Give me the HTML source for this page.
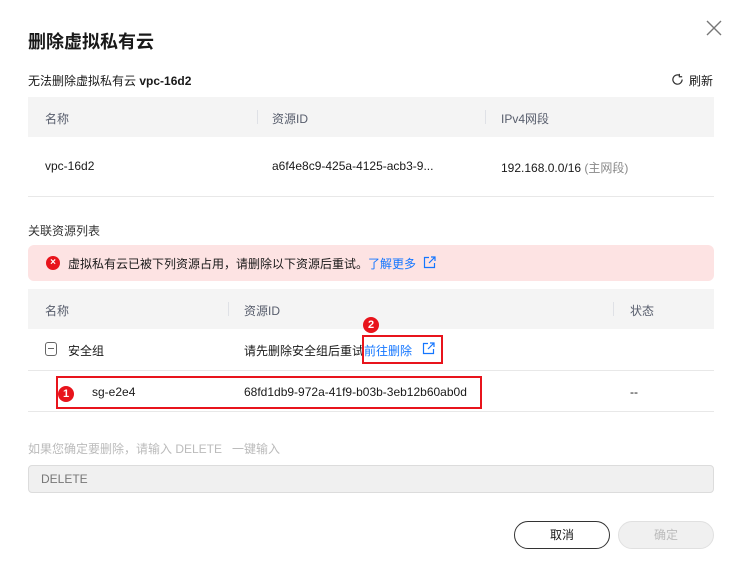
<!DOCTYPE html>
<html><head><meta charset="utf-8"><style>
*{margin:0;padding:0;box-sizing:border-box}
body{width:740px;height:574px;background:#fff;font-family:"Liberation Sans","Noto Sans CJK SC",sans-serif;font-size:12px;color:#191919;position:relative;overflow:hidden}
.a{position:absolute;white-space:nowrap}
.hdr{position:absolute;left:28px;width:686px;background:#f4f4f4;color:#575d6c}
.sep{position:absolute;top:50%;width:1px;height:14px;margin-top:-7px;background:#dfe1e6}
.line{position:absolute;left:28px;width:686px;height:1px;background:#e8e8e8}
.blue{color:#1476ff}
.red{border:2px solid #e8141c;position:absolute}
.num{position:absolute;width:16px;height:16px;border-radius:50%;background:#e8141c;color:#fff;font-size:11px;text-align:center;line-height:16px;font-weight:bold}
</style></head><body>
<div class="a" style="left:28px;top:28px;font-size:18px;font-weight:bold">删除虚拟私有云</div>
<svg class="a" style="left:706px;top:20px" width="16" height="16" viewBox="0 0 16 16"><path d="M1 1L15 15M15 1L1 15" stroke="#777" stroke-width="1.4"/></svg>
<div class="a" style="left:28px;top:72px">无法删除虚拟私有云 <b>vpc-16d2</b></div>
<svg class="a" style="left:671px;top:73px" width="13" height="13" viewBox="0 0 14 14"><path d="M12 7A5 5 0 1 1 9.5 2.7M9 1v3h3" fill="none" stroke="#333" stroke-width="1.3"/></svg>
<div class="a" style="left:689px;top:72px">刷新</div>
<div class="hdr" style="top:97px;height:40px"><span class="a" style="left:17px;top:13px">名称</span><div class="sep" style="left:229px"></div><span class="a" style="left:244px;top:13px">资源ID</span><div class="sep" style="left:457px"></div><span class="a" style="left:473px;top:13px">IPv4网段</span></div>
<div class="a" style="left:45px;top:159px">vpc-16d2</div>
<div class="a" style="left:272px;top:159px">a6f4e8c9-425a-4125-acb3-9...</div>
<div class="a" style="left:501px;top:159px">192.168.0.0/16 <span style="color:#888">(主网段)</span></div>
<div class="line" style="top:196px"></div>
<div class="a" style="left:28px;top:222px;color:#333">关联资源列表</div>
<div class="a" style="left:28px;top:245px;width:686px;height:36px;background:#fde3e3;border-radius:6px"></div>
<div class="a" style="left:46px;top:256px;width:14px;height:14px;border-radius:50%;background:#e8141c;color:#fff;font-size:10px;text-align:center;line-height:14px;font-weight:bold">×</div>
<div class="a" style="left:68px;top:255px">虚拟私有云已被下列资源占用，请删除以下资源后重试。<span class="blue">了解更多</span></div>
<svg class="a" style="left:423px;top:256px" width="13" height="13" viewBox="0 0 13 13"><path d="M6 1.5H1.5v10h10V7M8 1h4v4M12 1L6 7" fill="none" stroke="#1476ff" stroke-width="1.2"/></svg>
<div class="hdr" style="top:289px;height:40px"><span class="a" style="left:17px;top:13px">名称</span><div class="sep" style="left:200px"></div><span class="a" style="left:216px;top:13px">资源ID</span><div class="sep" style="left:585px"></div><span class="a" style="left:602px;top:13px">状态</span></div>
<div class="a" style="left:45px;top:342px;width:12px;height:14px;border:1px solid #666;border-radius:3px"></div>
<div class="a" style="left:48px;top:348px;width:6px;height:1px;background:#666"></div>
<div class="a" style="left:68px;top:342px">安全组</div>
<div class="a" style="left:244px;top:342px">请先删除安全组后重试<span class="blue">前往删除</span></div>
<svg class="a" style="left:422px;top:342px" width="13" height="13" viewBox="0 0 13 13"><path d="M6 1.5H1.5v10h10V7M8 1h4v4M12 1L6 7" fill="none" stroke="#1476ff" stroke-width="1.2"/></svg>
<div class="red" style="left:362px;top:335px;width:81px;height:29px"></div>
<div class="num" style="left:363px;top:317px">2</div>
<div class="line" style="top:370px"></div>
<div class="a" style="left:92px;top:385px">sg-e2e4</div>
<div class="a" style="left:244px;top:385px">68fd1db9-972a-41f9-b03b-3eb12b60ab0d</div>
<div class="a" style="left:630px;top:385px">--</div>
<div class="red" style="left:56px;top:376px;width:284px;height:33px;border-right:none;border-top-right-radius:0"></div>
<div class="red" style="left:56px;top:376px;width:426px;height:33px"></div>
<div class="num" style="left:58px;top:386px">1</div>
<div class="line" style="top:411px"></div>
<div class="a" style="left:28px;top:440px;color:#bbb">如果您确定要删除，请输入 DELETE &nbsp; 一键输入</div>
<div class="a" style="left:28px;top:465px;width:686px;height:28px;background:#f0f0f0;border:1px solid #dcdcdc;border-radius:4px"></div>
<div class="a" style="left:41px;top:472px;color:#777">DELETE</div>
<div class="a" style="left:514px;top:521px;width:96px;height:28px;border:1px solid #333;border-radius:14px;text-align:center;line-height:26px">取消</div>
<div class="a" style="left:618px;top:521px;width:96px;height:28px;border:1px solid #e0e0e0;background:#f0f0f0;color:#bbb;border-radius:14px;text-align:center;line-height:26px">确定</div>
</body></html>
